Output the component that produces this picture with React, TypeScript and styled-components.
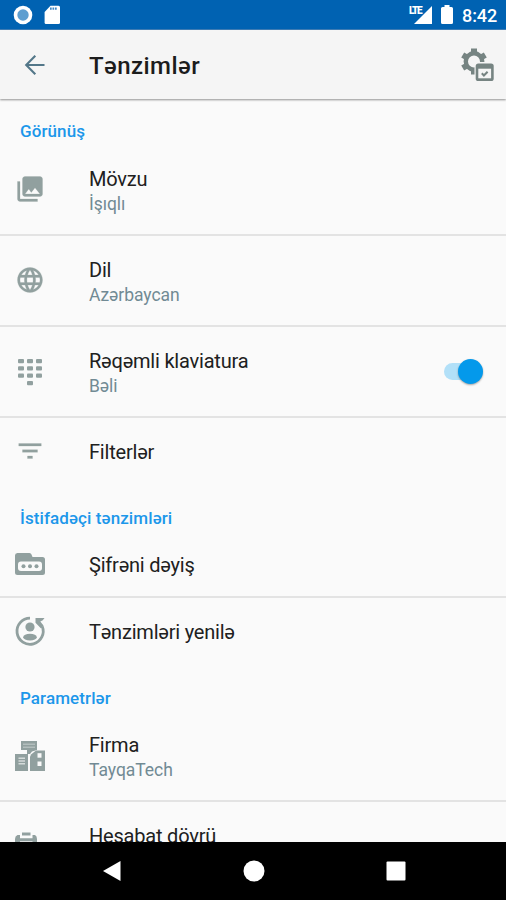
import React from "react";
import styled, { createGlobalStyle } from "styled-components";

const GlobalStyle = createGlobalStyle`
  body {
    margin: 0;
    background: #fafafa;
  }
  * {
    box-sizing: border-box;
  }
`;

const Screen = styled.div`
  width: 506px;
  height: 900px;
  display: flex;
  flex-direction: column;
  overflow: hidden;
  background: #fafafa;
  font-family: Roboto, "Liberation Sans", sans-serif;
`;

const StatusBar = styled.header`
  flex: none;
  height: 30px;
  padding: 0 10px 0 13px;
  display: flex;
  align-items: center;
  justify-content: space-between;
  background: #0062b2;
  border-bottom: 1px solid #3f7fb9;
  color: #fff;
`;

const StatusGroup = styled.div`
  display: flex;
  align-items: center;
`;

const Clock = styled.span`
  margin-left: 9px;
  width: 34px;
  font-size: 18px;
  font-weight: 500;
  line-height: 28px;
  letter-spacing: -0.1px;
  white-space: nowrap;
  padding-top: 3px;
`;

const AppBar = styled.div`
  flex: none;
  height: 69px;
  padding: 0 11px 0 20px;
  display: flex;
  align-items: center;
  background: #f5f5f5;
  box-shadow: 0 1px 2px rgba(0, 0, 0, 0.42);
  z-index: 1;
`;

const Title = styled.h1`
  margin: 2px 0 0 39px;
  flex: 1;
  font-size: 24px;
  font-weight: 500;
  line-height: 30px;
  letter-spacing: 0.45px;
  color: #1c1c1c;
`;

const Content = styled.main`
  flex: 1;
  min-height: 0;
  overflow: hidden;
  padding-top: 1px;
`;

const SectionTitle = styled.h2`
  margin: 0;
  height: 45px;
  padding: 21px 20px 0;
  font-size: 17px;
  font-weight: 500;
  line-height: 22px;
  letter-spacing: 0.1px;
  color: #1c97ea;

  section:first-child > & {
    padding-top: 20px;
  }
`;

const Row = styled.div<{ $tall?: boolean; $divided?: boolean; $short?: boolean }>`
  height: ${(p) => (p.$tall ? 91 : p.$short ? 67 : 68)}px;
  padding: 0 23px 0 14px;
  display: flex;
  align-items: center;
  border-bottom: ${(p) => (p.$divided ? "2px solid #e3e3e3" : "0")};
`;

const IconCell = styled.div`
  width: 32px;
  height: 32px;
  display: flex;
  align-items: center;
  justify-content: center;
  color: #91a09f;
`;

const Labels = styled.div<{ $lowered?: boolean }>`
  flex: 1;
  margin-left: 43px;
  padding-top: ${(p) => (p.$lowered ? 2 : 0)}px;
`;

const Name = styled.div`
  font-size: 20px;
  line-height: 26px;
  letter-spacing: -0.2px;
  color: #202020;
  white-space: nowrap;
`;

const Value = styled.div`
  font-size: 17.5px;
  line-height: 24px;
  letter-spacing: -0.05px;
  color: #718a94;
  white-space: nowrap;
`;

const Track = styled.div`
  width: 39px;
  height: 25px;
  display: flex;
  align-items: center;
  justify-content: flex-end;

  &::before {
    content: "";
    width: 26px;
    height: 17px;
    margin-right: -12px;
    border-radius: 9px 0 0 9px;
    background: #b2e0f8;
  }
`;

const Thumb = styled.div`
  width: 25px;
  height: 25px;
  border-radius: 50%;
  background: #0499eb;
  box-shadow: 0 1px 2px rgba(0, 0, 0, 0.35);
  z-index: 1;
`;

const NavBar = styled.nav`
  flex: none;
  height: 58px;
  padding: 0 39px 0 41px;
  display: grid;
  grid-template-columns: repeat(3, 1fr);
  align-items: center;
  justify-items: center;
  background: #000;
  z-index: 1;
`;

const Material = ({ d }: { d: string }) => (
  <svg width="30" height="30" viewBox="0 0.8 24 24" fill="currentColor" stroke="currentColor" strokeWidth="0.2">
    <path d={d} />
  </svg>
);

const PhotosIcon = () => (
  <Material d="M22 16V4c0-1.1-.9-2-2-2H8c-1.1 0-2 .9-2 2v12c0 1.1.9 2 2 2h12c1.1 0 2-.9 2-2zm-11-4l2.03 2.71L16 11l4 5H8l3-4zM2 6v14c0 1.1.9 2 2 2h14v-2H4V6H2z" />
);

const GlobeIcon = () => (
  <Material d="M11.99 2C6.47 2 2 6.48 2 12s4.47 10 9.99 10C17.52 22 22 17.52 22 12S17.52 2 11.99 2zm6.93 6h-2.95c-.32-1.25-.78-2.45-1.38-3.56 1.84.63 3.37 1.91 4.33 3.56zM12 4.04c.83 1.2 1.48 2.53 1.91 3.96h-3.82c.43-1.43 1.08-2.76 1.91-3.96zM4.26 14C4.1 13.36 4 12.69 4 12s.1-1.36.26-2h3.38c-.08.66-.14 1.32-.14 2s.06 1.34.14 2H4.26zm.82 2h2.95c.32 1.25.78 2.45 1.38 3.56-1.84-.63-3.37-1.9-4.33-3.56zm2.95-8H5.08c.96-1.66 2.49-2.93 4.33-3.56C8.81 5.55 8.35 6.75 8.03 8zM12 19.96c-.83-1.2-1.48-2.53-1.91-3.96h3.82c-.43 1.43-1.08 2.76-1.91 3.96zM14.34 14H9.66c-.09-.66-.16-1.32-.16-2s.07-1.35.16-2h4.68c.09.65.16 1.32.16 2s-.07 1.34-.16 2zm.25 5.56c.6-1.11 1.06-2.31 1.38-3.56h2.95c-.96 1.65-2.49 2.93-4.33 3.56zM16.36 14c.08-.66.14-1.32.14-2s-.06-1.34-.14-2h3.38c.16.64.26 1.31.26 2s-.1 1.36-.26 2h-3.38z" />
);

const FilterIcon = () => <Material d="M10 18h4v-2h-4v2zM3 6v2h18V6H3zm3 7h12v-2H6v2z" />;

const KEY_COLUMNS = [4, 13, 22];
const KEY_ROWS = [3, 10.3, 17.6];

const KeypadIcon = () => (
  <svg width="32" height="32" viewBox="0 0 32 32" fill="currentColor">
    {KEY_ROWS.map((y) =>
      KEY_COLUMNS.map((x) => <rect key={`${x}-${y}`} x={x} y={y} width="6" height="4.2" rx="1" />)
    )}
    <rect x="13" y="25" width="6" height="4.2" rx="1" />
  </svg>
);

const FolderIcon = () => (
  <svg width="32" height="32" viewBox="0 0 32 32">
    <path
      fill="currentColor"
      d="M3.4 5H15.5Q17 5 17.5 6.5L18.5 9H28.5Q31 9 31 11.5V24.5Q31 27 28.5 27H3.5Q1 27 1 24.5V7.5Q1 5 3.4 5Z"
    />
    <rect x="4" y="13.5" width="24" height="9.5" rx="3" fill="#fafafa" />
    <g fill="currentColor">
      <circle cx="9.5" cy="18.2" r="2" />
      <circle cx="16" cy="18.2" r="2" />
      <circle cx="22.5" cy="18.2" r="2" />
    </g>
  </svg>
);

const UserRefreshIcon = () => (
  <svg width="32" height="32" viewBox="0 0.8 32 32">
    <path
      d="M16 2.9A13.1 13.1 0 1 0 28.2 11"
      fill="none"
      stroke="currentColor"
      strokeWidth="2.8"
    />
    <path d="M21.5 2.8H30.5L28.8 5L26.3 6.4L29.5 10.2L26.8 13L21.5 7.5Z" fill="currentColor" />
    <circle cx="16" cy="11.8" r="4.6" fill="currentColor" />
    <ellipse cx="16" cy="22" rx="6.8" ry="3.4" fill="currentColor" />
  </svg>
);

const BuildingsIcon = () => (
  <svg width="32" height="32" viewBox="0 0 32 32">
    <g fill="currentColor">
      <path d="M7 1H23V10L18 11.5L16 14H13V10H7Z" />
      <path d="M1 14H14V31H1Z" />
      <path d="M17 14.5L22 10.5H31V31H16V17Z" />
    </g>
    <g fill="#fafafa">
      <path d="M9 3.8H21V4.6H9ZM9 6.8H21V7.6H9Z" opacity=".65" />
      <rect x="23.5" y="13.2" width="4" height="4.5" />
      <rect x="23.5" y="21.5" width="4" height="4.5" />
      <path d="M4.5 17.5H11V19H4.5ZM4.5 20.2H11V21.7H4.5ZM4.5 22.9H11V24.4H4.5Z" opacity=".65" />
    </g>
  </svg>
);

const ReportIcon = () => (
  <svg width="32" height="32" viewBox="0 0 32 32">
    <path
      fill="currentColor"
      d="M8 .6H16.5V3.6H8ZM3.5 3H6V6.3H18.5V3H21Q23 4 23 7V30H1V7Q1 4 3.5 3Z"
    />
    <path d="M6 9.3H18.5V26H6Z" fill="#fafafa" />
  </svg>
);

const BackIcon = () => (
  <svg width="30" height="30" viewBox="0 0 30 30" fill="none" stroke="#537789" strokeWidth="2.1">
    <path d="M24.5 15H7M15.3 5.8L6.2 15L15.3 24.2" />
  </svg>
);

const SyncSettingsIcon = () => (
  <svg width="36" height="36" viewBox="0 0.5 36 36">
    <g fill="none" stroke="#768482">
      <circle cx="15" cy="15" r="8.2" strokeWidth="4.4" />
      <path d="M15 2V7M26.3 8.5L21.9 11M26.3 21.5L21.9 19M15 28V23M3.7 21.5L8.1 19M3.7 8.5L8.1 11" strokeWidth="6" />
    </g>
    <rect x="15.5" y="15.5" width="20" height="20" fill="#f5f5f5" />
    <rect x="16.7" y="17" width="18" height="17.6" rx="2.6" fill="#768482" />
    <rect x="19.3" y="22.2" width="12.8" height="9.6" fill="#f5f5f5" />
    <path d="M22.8 26.8L24.9 28.9L28.6 25.2" fill="none" stroke="#768482" strokeWidth="2.1" />
  </svg>
);

const RecordIcon = () => (
  <svg width="20" height="20" viewBox="0 0 20 20">
    <circle cx="10" cy="10" r="9.3" fill="#fff" />
    <circle cx="10" cy="10" r="5.7" fill="#5d9ed0" />
  </svg>
);

const SdCardIcon = () => (
  <svg width="17" height="20" viewBox="0 0 17 20">
    <path d="M6.5 .8H14.5Q16 .8 16 2.3V17.5Q16 19 14.5 19H2Q.6 19 .6 17.5V7Z" fill="#fff" />
    <path d="M6 3.7H13.5" stroke="#0062b2" strokeWidth="2.2" strokeDasharray="1.7 .8" opacity=".75" />
  </svg>
);

const LteLabel = styled.span`
  width: 13px;
  height: 20px;
  margin-right: -8px;
  font-size: 10px;
  font-weight: 900;
  line-height: 12px;
  letter-spacing: -1.4px;
`;

const SignalIcon = styled.svg`
  margin-right: 9px;
`;

const SdSlot = styled.div`
  display: flex;
  margin-left: 11px;
`;

type Setting = {
  name: string;
  value?: string;
  icon: React.ReactNode;
  divided?: boolean;
  short?: boolean;
  tall?: boolean;
  toggle?: boolean;
};

const SECTIONS: { title: string; settings: Setting[] }[] = [
  {
    title: "Görünüş",
    settings: [
      { name: "Mövzu", value: "İşıqlı", icon: <PhotosIcon />, divided: true, tall: true },
      { name: "Dil", value: "Azərbaycan", icon: <GlobeIcon />, divided: true, tall: true },
      { name: "Rəqəmli klaviatura", value: "Bəli", icon: <KeypadIcon />, divided: true, tall: true, toggle: true },
      { name: "Filterlər", icon: <FilterIcon /> },
    ],
  },
  {
    title: "İstifadəçi tənzimləri",
    settings: [
      { name: "Şifrəni dəyiş", icon: <FolderIcon />, divided: true, short: true },
      { name: "Tənzimləri yenilə", icon: <UserRefreshIcon /> },
    ],
  },
  {
    title: "Parametrlər",
    settings: [
      { name: "Firma", value: "TayqaTech", icon: <BuildingsIcon />, divided: true, tall: true },
      { name: "Hesabat dövrü", value: "\u00a0", icon: <ReportIcon />, tall: true },
    ],
  },
];

export default function App() {
  return (
    <>
      <GlobalStyle />
      <Screen>
        <StatusBar>
          <StatusGroup>
            <RecordIcon />
            <SdSlot>
              <SdCardIcon />
            </SdSlot>
          </StatusGroup>
          <StatusGroup>
            <LteLabel>LTE</LteLabel>
            <SignalIcon width="18" height="18" viewBox="0 0 18 18">
              <path d="M18 0V18H0Z" fill="#fff" />
            </SignalIcon>
            <svg width="12" height="19" viewBox="0 0 12 19">
              <path d="M3.5 0H8.5V2H10.5Q12 2 12 3.5V17.5Q12 19 10.5 19H1.5Q0 19 0 17.5V3.5Q0 2 1.5 2H3.5Z" fill="#fff" />
            </svg>
            <Clock>8:42</Clock>
          </StatusGroup>
        </StatusBar>
        <AppBar>
          <BackIcon />
          <Title>Tənzimlər</Title>
          <SyncSettingsIcon />
        </AppBar>
        <Content>
          {SECTIONS.map((section) => (
            <section key={section.title}>
              <SectionTitle>{section.title}</SectionTitle>
              {section.settings.map((s) => (
                <Row key={s.name} $tall={s.tall} $divided={s.divided} $short={s.short}>
                  <IconCell>{s.icon}</IconCell>
                  <Labels $lowered={s.divided}>
                    <Name>{s.name}</Name>
                    {s.value && <Value>{s.value}</Value>}
                  </Labels>
                  {s.toggle && (
                    <Track>
                      <Thumb />
                    </Track>
                  )}
                </Row>
              ))}
            </section>
          ))}
        </Content>
        <NavBar>
          <svg width="20" height="22" viewBox="0 0 20 22">
            <path d="M18.5 1V21L1 11Z" fill="#fff" />
          </svg>
          <svg width="22" height="22" viewBox="0 0 22 22">
            <circle cx="11" cy="11" r="10.5" fill="#fff" />
          </svg>
          <svg width="20" height="20" viewBox="0 0 20 20">
            <rect x=".5" y=".5" width="19" height="19" rx="1" fill="#fff" />
          </svg>
        </NavBar>
      </Screen>
    </>
  );
}
